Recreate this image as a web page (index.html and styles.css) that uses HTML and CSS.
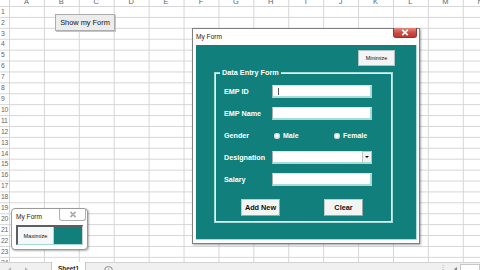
FILE: index.html
```html
<!DOCTYPE html>
<html>
<head>
<meta charset="utf-8">
<link rel="stylesheet" href="styles.css">
</head>
<body>
<div class="app">
  <div class="sheet">
    <div class="colhead">
      <div class="corner"></div>
      <div class="col">A</div><div class="col">B</div><div class="col">C</div><div class="col">D</div>
      <div class="col">E</div><div class="col">F</div><div class="col">G</div><div class="col">H</div>
      <div class="col">I</div><div class="col">J</div><div class="col">K</div><div class="col">L</div>
      <div class="col">M</div><div class="col">N</div>
    </div>
    <div class="rows">
      <div class="rowhead">
        <div class="rn">1</div><div class="rn">2</div><div class="rn">3</div><div class="rn">4</div>
        <div class="rn">5</div><div class="rn">6</div><div class="rn">7</div><div class="rn">8</div>
        <div class="rn">9</div><div class="rn">10</div><div class="rn">11</div><div class="rn">12</div>
        <div class="rn">13</div><div class="rn">14</div><div class="rn">15</div><div class="rn">16</div>
        <div class="rn">17</div><div class="rn">18</div><div class="rn">19</div><div class="rn">20</div>
        <div class="rn">21</div><div class="rn">22</div><div class="rn">23</div><div class="rn">24</div>
      </div>
      <div class="cells"></div>
    </div>
  </div>
  <div class="tabbar">
    <div class="nav"><span class="arrow-l"></span><span class="arrow-r"></span></div>
    <div class="tab">Sheet1</div>
    <div class="addsheet">+</div>
    <div class="spacer"></div>
    <div class="dots">⋮</div>
    <div class="scroll-left"></div>
    <div class="hscroll"></div>
  </div>

  <button class="show-btn">Show my Form</button>

  <div class="main-form">
    <div class="titlebar">
      <span class="title">My Form</span>
      <div class="close">
        <svg width="8" height="7" viewBox="0 0 8 7"><path d="M1.2 0.8 L6.8 6.2 M6.8 0.8 L1.2 6.2" stroke="#fff" stroke-width="1.7" fill="none"/></svg>
      </div>
    </div>
    <div class="client">
      <button class="minimize">Minimize</button>
      <div class="frame">
        <span class="frame-title">Data Entry Form</span>
        <div class="fields">
          <span class="label">EMP ID</span>
          <div class="textbox"><span class="caret"></span></div>
          <span class="label">EMP Name</span>
          <div class="textbox"></div>
          <span class="label">Gender</span>
          <div class="radios">
            <span class="radio male"><span class="dot"></span>Male</span>
            <span class="radio"><span class="dot"></span>Female</span>
          </div>
          <span class="label">Designation</span>
          <div class="combo">
            <div class="textbox combo-input"></div>
            <div class="drop"><span class="tri"></span></div>
          </div>
          <span class="label">Salary</span>
          <div class="textbox"></div>
        </div>
        <div class="actions">
          <button class="btn">Add New</button>
          <button class="btn">Clear</button>
        </div>
      </div>
    </div>
  </div>

  <div class="mini-form">
    <div class="mini-title">
      <span class="title">My Form</span>
      <div class="mini-close">
        <svg width="8" height="7" viewBox="0 0 8 7"><path d="M1.5 1 L6.5 6 M6.5 1 L1.5 6" stroke="#777" stroke-width="1.5" fill="none"/><path d="M1.5 1 L6.5 6 M6.5 1 L1.5 6" stroke="#fff" stroke-width="0.6" fill="none"/></svg>
      </div>
    </div>
    <div class="mini-body">
      <button class="maximize">Maximize</button>
    </div>
  </div>
</div>
</body>
</html>
```

FILE: styles.css
```css
html, body {
  margin: 0;
  padding: 0;
}
body {
  font-family: "Liberation Sans", Arial, sans-serif;
  background: #fff;
}
.app {
  position: relative;
  width: 480px;
  height: 270px;
  overflow: hidden;
  display: flex;
  flex-direction: column;
}
.sheet {
  flex: 1;
  display: flex;
  flex-direction: column;
  overflow: hidden;
}
.colhead {
  height: 5.8px;
  flex: none;
  display: flex;
  overflow: hidden;
  background-color: #fff;
  background-image: linear-gradient(to right, #d4d4d4 1px, transparent 1px);
  background-size: 34.92px 100%;
  background-position: 9px 0;
}
.corner {
  width: 9px;
  flex: none;
}
.col {
  width: 34.92px;
  flex: none;
  text-align: center;
  font-size: 7.5px;
  line-height: 3px;
  color: #666;
}
.rows {
  flex: 1;
  display: flex;
  overflow: hidden;
  background-image:
    linear-gradient(to bottom, #d6d6d6 1px, transparent 1px),
    linear-gradient(to right, #d6d6d6 1px, transparent 1px);
  background-size: 100% 10.91px, 34.92px 100%;
  background-position: 0 0, 9px 0;
}
.rowhead {
  width: 9px;
  flex: none;
}
.rn {
  height: 10.91px;
  display: flex;
  align-items: center;
  padding-left: 1px;
  font-size: 6.8px;
  letter-spacing: -0.4px;
  color: #666;
}
.cells {
  flex: 1;
}

/* tab bar */
.tabbar {
  height: 8px;
  flex: none;
  box-sizing: border-box;
  background: #f0f0f0;
  border-top: 1px solid #d2d2d2;
  display: flex;
  align-items: flex-start;
}
.nav {
  width: 51px;
  display: flex;
  gap: 14px;
  padding: 4px 0 0 8px;
  box-sizing: border-box;
}
.arrow-l, .arrow-r {
  width: 0;
  height: 0;
  border-top: 3px solid transparent;
  border-bottom: 3px solid transparent;
}
.arrow-l { border-right: 3px solid #b4b4b4; }
.arrow-r { border-left: 3px solid #b4b4b4; }
.tab {
  width: 35px;
  height: 8px;
  margin-top: -1px;
  box-sizing: border-box;
  background: #fff;
  border-left: 1px solid #c6c6c6;
  border-right: 1px solid #c6c6c6;
  text-align: center;
  font-size: 6.4px;
  font-weight: bold;
  color: #222;
  line-height: 8px;
  padding-top: 3px;
}
.addsheet {
  width: 7px;
  height: 7px;
  margin: 3px 0 0 18px;
  border: 1px solid #8a8a8a;
  border-radius: 50%;
  font-size: 7px;
  line-height: 7px;
  text-align: center;
  color: #777;
}
.spacer { flex: 1; }
.dots {
  font-size: 6px;
  color: #999;
  line-height: 8px;
  margin-right: 8px;
}
.scroll-left {
  width: 0;
  height: 0;
  margin: 4px 3px 0 0;
  border-top: 2px solid transparent;
  border-bottom: 2px solid transparent;
  border-right: 3px solid #888;
}
.hscroll {
  width: 18px;
  height: 7px;
  margin-top: 1px;
  background: #fff;
  border: 1px solid #c8c8c8;
}

/* show button */
.show-btn {
  position: absolute;
  left: 55px;
  top: 14px;
  width: 60px;
  height: 17px;
  box-sizing: border-box;
  padding: 0;
  margin: 0;
  background: #ececec;
  border: 1px solid #adadad;
  box-shadow: 1px 1px 0 #c4c4c4;
  font-family: "Liberation Sans", Arial, sans-serif;
  font-size: 7.4px;
  color: #111;
}

/* main user form window */
.main-form {
  position: absolute;
  left: 192px;
  top: 28px;
  width: 228px;
  height: 216px;
  box-sizing: border-box;
  border: 1px solid #7f7f7f;
  background: #fff;
  padding: 0 2px 3px 3px;
  display: flex;
  flex-direction: column;
  box-shadow: 1px 1px 2px rgba(0, 0, 0, 0.35);
}
.titlebar {
  height: 16px;
  flex: none;
  position: relative;
  display: flex;
  align-items: center;
}
.title {
  font-size: 6.6px;
  color: #222;
  line-height: 14px;
}
.close {
  position: absolute;
  right: 0;
  top: -1px;
  width: 24px;
  height: 10px;
  box-sizing: border-box;
  border: 1px solid #8c3a33;
  border-top: none;
  border-radius: 0 0 3px 3px;
  background: linear-gradient(#e3887d, #cc4a3f 55%, #be3a30);
  display: flex;
  align-items: center;
  justify-content: center;
}
.client {
  flex: 1;
  background: #11807d;
  border-right: 1px solid #a9dbd7;
  border-bottom: 1px solid #a9dbd7;
  display: flex;
  flex-direction: column;
  align-items: flex-start;
  padding: 5px 0 0 18px;
}
.minimize {
  align-self: flex-end;
  margin: 0 21px 0 0;
  width: 37px;
  height: 16px;
  box-sizing: border-box;
  padding: 0;
  background: #f1f5f5;
  border: 1px solid #b5c2c2;
  font-family: "Liberation Sans", Arial, sans-serif;
  font-size: 5.5px;
  color: #111;
}
.frame {
  position: relative;
  margin-top: 6px;
  width: 179px;
  height: 151px;
  box-sizing: border-box;
  border: 1px solid #a9dbd7;
  box-shadow: inset 0 0 0 1px #e4f6f4;
  padding: 12px 0 0 9px;
}
.frame-title {
  position: absolute;
  top: -5px;
  left: 5px;
  padding: 0 2px;
  background: #11807d;
  color: #fff;
  font-weight: bold;
  font-size: 7.3px;
  line-height: 9px;
}
.fields {
  display: grid;
  grid-template-columns: 48px 100px;
  grid-auto-rows: 13px;
  row-gap: 9px;
  align-items: center;
}
.label {
  color: #fff;
  font-weight: bold;
  font-size: 7.2px;
}
.textbox {
  height: 13px;
  box-sizing: border-box;
  background: #fff;
  border-top: 1px solid #dbe6e6;
  border-left: 1px solid #a4b0b0;
  border-right: 2px solid #a9dbd7;
  border-bottom: 2px solid #a9dbd7;
  display: flex;
  align-items: center;
}
.caret {
  width: 1px;
  height: 7px;
  margin-left: 5px;
  background: #555;
}
.radios {
  display: flex;
  align-items: center;
}
.radio {
  display: flex;
  align-items: center;
  gap: 3px;
  color: #fff;
  font-weight: bold;
  font-size: 7px;
}
.radio.male {
  width: 60px;
  margin-left: 2px;
}
.dot {
  width: 6px;
  height: 6px;
  border-radius: 50%;
  background: radial-gradient(circle at 40% 40%, #ffffff, #e2eaea);
  box-shadow: inset 0 0 0 1px #c4d2d2;
}
.combo {
  display: flex;
  height: 13px;
}
.combo-input {
  flex: 1;
  border-right: none;
}
.drop {
  width: 10px;
  height: 13px;
  box-sizing: border-box;
  background: #f2f2f2;
  border: 1px solid #b9c4c4;
  border-bottom: 2px solid #a9dbd7;
  display: flex;
  align-items: center;
  justify-content: center;
}
.tri {
  width: 0;
  height: 0;
  border-left: 2px solid transparent;
  border-right: 2px solid transparent;
  border-top: 2px solid #111;
}
.actions {
  display: flex;
  gap: 44px;
  margin-top: 13px;
  padding-left: 17px;
}
.btn {
  width: 39px;
  height: 17px;
  box-sizing: border-box;
  padding: 0;
  background: #f3f5f5;
  border: 1px solid #c2cccc;
  border-right-color: #9aa6a6;
  border-bottom-color: #9aa6a6;
  font-family: "Liberation Sans", Arial, sans-serif;
  font-size: 7.3px;
  font-weight: bold;
  color: #111;
}

/* minimized form */
.mini-form {
  position: absolute;
  left: 11px;
  top: 208px;
  width: 77px;
  height: 42px;
  box-sizing: border-box;
  border: 1px solid #9a9a9a;
  border-radius: 4px;
  background: #fff;
  padding: 0 4px 4px 4px;
  display: flex;
  flex-direction: column;
  box-shadow: 1px 1px 2px rgba(0, 0, 0, 0.3);
}
.mini-title {
  height: 16px;
  flex: none;
  display: flex;
  justify-content: space-between;
  align-items: flex-start;
}
.mini-title .title {
  line-height: 16px;
}
.mini-close {
  width: 27px;
  height: 12px;
  box-sizing: border-box;
  margin-right: -3px;
  border: 1px solid #b0b0b0;
  border-top: none;
  border-radius: 0 0 3px 3px;
  display: flex;
  align-items: center;
  justify-content: center;
}
.mini-body {
  flex: 1;
  display: flex;
  background: #11807d;
  border-top: 2px solid #5e5e5e;
  border-left: 2px solid #5e5e5e;
  border-right: 1px solid #d0d0d0;
  border-bottom: 1px solid #a9dbd7;
}
.maximize {
  width: 36px;
  padding: 0;
  margin: 0;
  background: #f4f8f8;
  border: none;
  border-right: 1px solid #c0cccc;
  font-family: "Liberation Sans", Arial, sans-serif;
  font-size: 5.7px;
  color: #111;
}
```
